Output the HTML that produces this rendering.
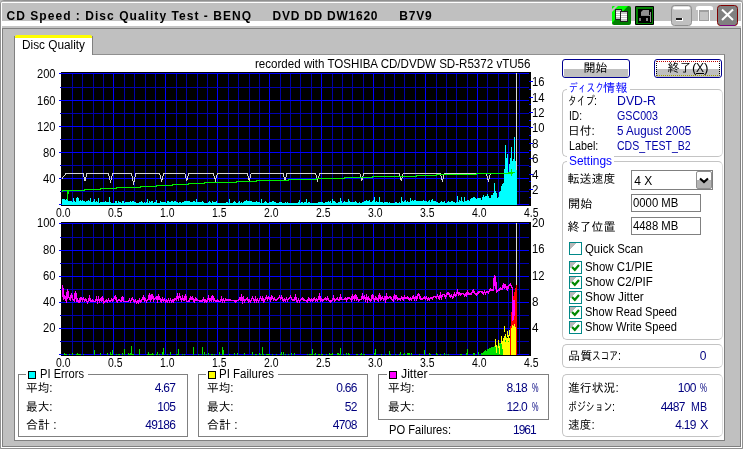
<!DOCTYPE html><html><head><meta charset="utf-8"><title>CD Speed : Disc Quality Test</title><style>
html,body{margin:0;padding:0;}
body{width:743px;height:449px;overflow:hidden;background:#c0c0c0;position:relative;font-family:"Liberation Sans","IPAGothic","Noto Sans CJK JP",sans-serif;font-size:12px;}
.a{position:absolute;}
.t{position:absolute;white-space:pre;line-height:12px;height:12px;transform-origin:0 0;}
.gb{position:absolute;border:1px solid #808080;box-sizing:border-box;}
.rg{position:absolute;border:1px solid #c4c4c4;border-right-color:#dcdcdc;border-radius:5px;box-sizing:border-box;}
.ed{position:absolute;box-sizing:border-box;border:1px solid #808080;background:#fff;}
.cb{position:absolute;width:13px;height:13px;box-sizing:border-box;border:1px solid #008888;background:linear-gradient(135deg,#b8b8b8 0%,#b8b8b8 28%,#fff 29%,#fff 100%);}
.btn{position:absolute;box-sizing:border-box;border:1px solid #000090;border-radius:3px;background:#fff;}
.btn::after{content:'';position:absolute;left:1px;right:1px;top:9px;bottom:0;background:#c0c0c0;}
.sq{position:absolute;width:8px;height:8px;box-sizing:border-box;border:1px solid #000;}
.bg{position:absolute;background:#fff;}

</style></head><body>
<div class="a" style="left:0;top:0;width:743px;height:449px;box-sizing:border-box;border:1px solid #909090;border-radius:4px 4px 0 0;"></div>
<div class="a" style="left:1px;top:1px;width:741px;height:447px;box-sizing:border-box;border:1px solid #fff;border-top-color:#b0b0b0;border-radius:3px 3px 0 0;"></div>
<div class="a" style="left:2px;top:2px;width:739px;height:1px;background:#fff;"></div>
<div class="a" style="left:2px;top:3px;width:739px;height:18px;background:#c0c0c0;"></div>
<div class="a" style="left:2px;top:21px;width:739px;height:5px;background:#fff;"></div>
<div class="a" style="left:2px;top:26px;width:739px;height:2px;background:#c4c4c4;"></div>
<div class="a" style="left:2px;top:28px;width:739px;height:419px;box-sizing:border-box;border:1px solid #808080;background:#c0c0c0;"></div>
<div class="a" style="left:14px;top:54px;width:711px;height:387px;box-sizing:border-box;background:#fff;border:1px solid #808080;border-top-color:#909090;"></div>
<div class="a" style="left:14px;top:36px;width:79px;height:19px;background:#fff;border-right:1px solid #808080;border-left:1px solid #808080;box-sizing:border-box;"></div>
<div class="a" style="left:15px;top:35px;width:77px;height:3px;background:#ffff00;border-radius:2px 2px 0 0;"></div>
<svg class="a" style="left:0;top:0" width="743" height="30" viewBox="0 0 743 30">
<g shape-rendering="crispEdges">
<rect x="612" y="6" width="19" height="19" rx="2" fill="#008000" shape-rendering="auto"/>
<path d="M613 6 h15 l-16 17 v-16 z" fill="#00ff00" shape-rendering="auto"/>
<path d="M612 9 l3 -3 h3 l-6 6z" fill="#c0c0c0" shape-rendering="auto"/>
<rect x="615" y="9" width="7" height="11" fill="#202020"/>
<rect x="616" y="10" width="5" height="9" fill="#c0c0c0"/>
<path d="M616 12.5h5M616 14.5h5M616 16.5h5" stroke="#fff"/>
<rect x="620" y="11" width="8" height="11" fill="#202020"/>
<rect x="621" y="12" width="6" height="9" fill="#c8c8c8"/>
<path d="M621 14.5h6M621 16.5h6M621 18.5h6" stroke="#fff"/>
<rect x="635" y="6" width="19" height="19" rx="1" fill="#000" shape-rendering="auto"/>
<rect x="636" y="7" width="17" height="17" fill="#008000"/>
<rect x="638" y="9" width="14" height="14" fill="#000"/>
<path d="M641 15 v-3 l2 -2 h6 v5z" fill="#909090" shape-rendering="auto"/>
<rect x="641" y="15" width="9" height="1" fill="#808080"/>
<rect x="650" y="12" width="1" height="10" fill="#909090"/>
<rect x="639" y="18" width="2" height="3" fill="#707070"/>
<rect x="646" y="18" width="2" height="3" fill="#808080"/>
</g>
<rect x="671.5" y="5.5" width="20" height="20" rx="3" fill="#c0c0c0" stroke="#909090"/>
<rect x="673" y="6.5" width="17" height="3" rx="1.5" fill="#fff"/>
<rect x="676" y="18" width="7" height="3" fill="#fff" shape-rendering="crispEdges"/>
<rect x="676" y="18" width="6" height="2" fill="#202020" shape-rendering="crispEdges"/>
<path d="M696 10 v-2 q0 -2 3 -2 h11 q3 0 3 2 v2 z" fill="#fff"/>
<rect x="698.5" y="9.5" width="11" height="12" fill="none" stroke="#fff" shape-rendering="crispEdges"/>
<rect x="699.5" y="10.5" width="9" height="10" fill="#c4c4c4" stroke="#a0a0a0" shape-rendering="crispEdges"/>
<rect x="699" y="10" width="10" height="2" fill="#a0a0a0" shape-rendering="crispEdges"/>
<rect x="717.5" y="5.5" width="20" height="20" rx="3" fill="#808080" stroke="#800000"/>
<path d="M720 25.5 h15" stroke="#800080"/>
<path d="M722 9.5 l11 10.5 M733 9.5 l-11 10.5" stroke="#fff" stroke-width="2" fill="none"/>
</svg>
<svg class="a" style="left:0;top:0" width="743" height="449" viewBox="0 0 743 449" shape-rendering="crispEdges"><rect x="61" y="72" width="470" height="134" fill="#000"/><path d="M72.5 73V205" stroke="#0000a8"/><path d="M82.5 73V205" stroke="#0000a8"/><path d="M93.5 73V205" stroke="#0000a8"/><path d="M103.5 73V205" stroke="#0000a8"/><path d="M113.5 73V205" stroke="#0000ff"/><path d="M124.5 73V205" stroke="#0000a8"/><path d="M134.5 73V205" stroke="#0000a8"/><path d="M145.5 73V205" stroke="#0000a8"/><path d="M155.5 73V205" stroke="#0000a8"/><path d="M165.5 73V205" stroke="#0000ff"/><path d="M176.5 73V205" stroke="#0000a8"/><path d="M186.5 73V205" stroke="#0000a8"/><path d="M197.5 73V205" stroke="#0000a8"/><path d="M207.5 73V205" stroke="#0000a8"/><path d="M217.5 73V205" stroke="#0000ff"/><path d="M228.5 73V205" stroke="#0000a8"/><path d="M238.5 73V205" stroke="#0000a8"/><path d="M249.5 73V205" stroke="#0000a8"/><path d="M259.5 73V205" stroke="#0000a8"/><path d="M269.5 73V205" stroke="#0000ff"/><path d="M280.5 73V205" stroke="#0000a8"/><path d="M290.5 73V205" stroke="#0000a8"/><path d="M300.5 73V205" stroke="#0000a8"/><path d="M311.5 73V205" stroke="#0000a8"/><path d="M321.5 73V205" stroke="#0000ff"/><path d="M332.5 73V205" stroke="#0000a8"/><path d="M342.5 73V205" stroke="#0000a8"/><path d="M352.5 73V205" stroke="#0000a8"/><path d="M363.5 73V205" stroke="#0000a8"/><path d="M373.5 73V205" stroke="#0000ff"/><path d="M384.5 73V205" stroke="#0000a8"/><path d="M394.5 73V205" stroke="#0000a8"/><path d="M404.5 73V205" stroke="#0000a8"/><path d="M415.5 73V205" stroke="#0000a8"/><path d="M425.5 73V205" stroke="#0000ff"/><path d="M436.5 73V205" stroke="#0000a8"/><path d="M446.5 73V205" stroke="#0000a8"/><path d="M456.5 73V205" stroke="#0000a8"/><path d="M467.5 73V205" stroke="#0000a8"/><path d="M477.5 73V205" stroke="#0000ff"/><path d="M487.5 73V205" stroke="#0000a8"/><path d="M498.5 73V205" stroke="#0000a8"/><path d="M508.5 73V205" stroke="#0000a8"/><path d="M519.5 73V205" stroke="#0000a8"/><path d="M59 73.5H529" stroke="#0000ff"/><path d="M60 87.5H529" stroke="#0000b0"/><path d="M59 100.5H529" stroke="#0000ff"/><path d="M60 113.5H529" stroke="#0000b0"/><path d="M59 126.5H529" stroke="#0000ff"/><path d="M60 139.5H529" stroke="#0000b0"/><path d="M59 152.5H529" stroke="#0000ff"/><path d="M60 165.5H529" stroke="#0000b0"/><path d="M59 178.5H529" stroke="#0000ff"/><path d="M60 191.5H529" stroke="#0000b0"/><path d="M59 204.5H529" stroke="#0000ff"/><path d="M529 197.5H531" stroke="#0000ff"/><path d="M529 189.5H533" stroke="#0000ff"/><path d="M529 181.5H531" stroke="#0000ff"/><path d="M529 174.5H533" stroke="#0000ff"/><path d="M529 166.5H531" stroke="#0000ff"/><path d="M529 158.5H533" stroke="#0000ff"/><path d="M529 150.5H531" stroke="#0000ff"/><path d="M529 143.5H533" stroke="#0000ff"/><path d="M529 135.5H531" stroke="#0000ff"/><path d="M529 127.5H533" stroke="#0000ff"/><path d="M529 120.5H531" stroke="#0000ff"/><path d="M529 112.5H533" stroke="#0000ff"/><path d="M529 104.5H531" stroke="#0000ff"/><path d="M529 97.5H533" stroke="#0000ff"/><path d="M529 89.5H531" stroke="#0000ff"/><path d="M529 81.5H533" stroke="#0000ff"/><rect x="61" y="222" width="470" height="134" fill="#000"/><path d="M72.5 223V355" stroke="#0000a8"/><path d="M82.5 223V355" stroke="#0000a8"/><path d="M93.5 223V355" stroke="#0000a8"/><path d="M103.5 223V355" stroke="#0000a8"/><path d="M113.5 223V355" stroke="#0000ff"/><path d="M124.5 223V355" stroke="#0000a8"/><path d="M134.5 223V355" stroke="#0000a8"/><path d="M145.5 223V355" stroke="#0000a8"/><path d="M155.5 223V355" stroke="#0000a8"/><path d="M165.5 223V355" stroke="#0000ff"/><path d="M176.5 223V355" stroke="#0000a8"/><path d="M186.5 223V355" stroke="#0000a8"/><path d="M197.5 223V355" stroke="#0000a8"/><path d="M207.5 223V355" stroke="#0000a8"/><path d="M217.5 223V355" stroke="#0000ff"/><path d="M228.5 223V355" stroke="#0000a8"/><path d="M238.5 223V355" stroke="#0000a8"/><path d="M249.5 223V355" stroke="#0000a8"/><path d="M259.5 223V355" stroke="#0000a8"/><path d="M269.5 223V355" stroke="#0000ff"/><path d="M280.5 223V355" stroke="#0000a8"/><path d="M290.5 223V355" stroke="#0000a8"/><path d="M300.5 223V355" stroke="#0000a8"/><path d="M311.5 223V355" stroke="#0000a8"/><path d="M321.5 223V355" stroke="#0000ff"/><path d="M332.5 223V355" stroke="#0000a8"/><path d="M342.5 223V355" stroke="#0000a8"/><path d="M352.5 223V355" stroke="#0000a8"/><path d="M363.5 223V355" stroke="#0000a8"/><path d="M373.5 223V355" stroke="#0000ff"/><path d="M384.5 223V355" stroke="#0000a8"/><path d="M394.5 223V355" stroke="#0000a8"/><path d="M404.5 223V355" stroke="#0000a8"/><path d="M415.5 223V355" stroke="#0000a8"/><path d="M425.5 223V355" stroke="#0000ff"/><path d="M436.5 223V355" stroke="#0000a8"/><path d="M446.5 223V355" stroke="#0000a8"/><path d="M456.5 223V355" stroke="#0000a8"/><path d="M467.5 223V355" stroke="#0000a8"/><path d="M477.5 223V355" stroke="#0000ff"/><path d="M487.5 223V355" stroke="#0000a8"/><path d="M498.5 223V355" stroke="#0000a8"/><path d="M508.5 223V355" stroke="#0000a8"/><path d="M519.5 223V355" stroke="#0000a8"/><path d="M59 223.5H529" stroke="#0000ff"/><path d="M60 237.5H529" stroke="#0000b0"/><path d="M59 250.5H529" stroke="#0000ff"/><path d="M60 263.5H529" stroke="#0000b0"/><path d="M59 276.5H529" stroke="#0000ff"/><path d="M60 289.5H529" stroke="#0000b0"/><path d="M59 302.5H529" stroke="#0000ff"/><path d="M60 315.5H529" stroke="#0000b0"/><path d="M59 328.5H529" stroke="#0000ff"/><path d="M60 341.5H529" stroke="#0000b0"/><path d="M59 354.5H529" stroke="#0000ff"/><path d="M62.5 205.0V199.0M63.5 205.0V199.0M64.5 205.0V199.0M65.5 205.0V200.0M66.5 205.0V199.0M67.5 205.0V195.0M68.5 205.0V201.0M69.5 205.0V201.0M70.5 205.0V201.0M71.5 205.0V201.0M72.5 205.0V202.0M73.5 205.0V198.0M74.5 205.0V201.0M75.5 205.0V202.0M76.5 205.0V198.0M77.5 205.0V197.0M78.5 205.0V198.0M79.5 205.0V201.0M80.5 205.0V200.0M81.5 205.0V201.0M82.5 205.0V200.0M83.5 205.0V201.0M84.5 205.0V201.0M85.5 205.0V202.0M86.5 205.0V201.0M87.5 205.0V201.0M88.5 205.0V200.0M89.5 205.0V201.0M90.5 205.0V198.0M91.5 205.0V202.0M92.5 205.0V202.0M93.5 205.0V201.0M94.5 205.0V199.0M95.5 205.0V202.0M96.5 205.0V201.0M97.5 205.0V202.0M98.5 205.0V198.0M99.5 205.0V203.0M100.5 205.0V202.0M101.5 205.0V202.0M102.5 205.0V202.0M103.5 205.0V202.0M104.5 205.0V202.0M105.5 205.0V201.0M106.5 205.0V202.0M107.5 205.0V202.0M108.5 205.0V202.0M109.5 205.0V197.0M110.5 205.0V202.0M111.5 205.0V203.0M112.5 205.0V203.0M113.5 205.0V203.0M114.5 205.0V203.0M115.5 205.0V201.0M116.5 205.0V201.0M117.5 205.0V203.0M118.5 205.0V201.0M119.5 205.0V202.0M120.5 205.0V202.0M121.5 205.0V203.0M122.5 205.0V201.0M123.5 205.0V201.0M124.5 205.0V203.0M125.5 205.0V202.0M126.5 205.0V202.0M127.5 205.0V202.0M128.5 205.0V202.0M129.5 205.0V202.0M130.5 205.0V201.0M131.5 205.0V202.0M132.5 205.0V201.0M133.5 205.0V201.0M134.5 205.0V202.0M135.5 205.0V202.0M136.5 205.0V203.0M137.5 205.0V203.0M138.5 205.0V203.0M139.5 205.0V202.0M140.5 205.0V202.0M141.5 205.0V201.0M142.5 205.0V202.0M143.5 205.0V203.0M144.5 205.0V202.0M145.5 205.0V203.0M146.5 205.0V202.0M147.5 205.0V199.0M148.5 205.0V203.0M149.5 205.0V201.0M150.5 205.0V202.0M151.5 205.0V201.0M152.5 205.0V201.0M153.5 205.0V203.0M154.5 205.0V202.0M155.5 205.0V202.0M156.5 205.0V200.0M157.5 205.0V203.0M158.5 205.0V203.0M159.5 205.0V203.0M160.5 205.0V201.0M161.5 205.0V202.0M162.5 205.0V202.0M163.5 205.0V202.0M164.5 205.0V202.0M165.5 205.0V202.0M166.5 205.0V203.0M167.5 205.0V201.0M168.5 205.0V201.0M169.5 205.0V202.0M170.5 205.0V202.0M171.5 205.0V201.0M172.5 205.0V201.0M173.5 205.0V202.0M174.5 205.0V201.0M175.5 205.0V201.0M176.5 205.0V202.0M177.5 205.0V202.0M178.5 205.0V203.0M179.5 205.0V202.0M180.5 205.0V202.0M181.5 205.0V203.0M182.5 205.0V202.0M183.5 205.0V202.0M184.5 205.0V201.0M185.5 205.0V201.0M186.5 205.0V201.0M187.5 205.0V201.0M188.5 205.0V201.0M189.5 205.0V201.0M190.5 205.0V202.0M191.5 205.0V202.0M192.5 205.0V202.0M193.5 205.0V201.0M194.5 205.0V201.0M195.5 205.0V202.0M196.5 205.0V199.0M197.5 205.0V202.0M198.5 205.0V202.0M199.5 205.0V202.0M200.5 205.0V202.0M201.5 205.0V202.0M202.5 205.0V201.0M203.5 205.0V202.0M204.5 205.0V203.0M205.5 205.0V203.0M206.5 205.0V203.0M207.5 205.0V203.0M208.5 205.0V202.0M209.5 205.0V201.0M210.5 205.0V202.0M211.5 205.0V203.0M212.5 205.0V201.0M213.5 205.0V202.0M214.5 205.0V202.0M215.5 205.0V202.0M216.5 205.0V201.0M217.5 205.0V203.0M218.5 205.0V203.0M219.5 205.0V203.0M220.5 205.0V203.0M221.5 205.0V203.0M222.5 205.0V203.0M223.5 205.0V203.0M224.5 205.0V203.0M225.5 205.0V203.0M226.5 205.0V202.0M227.5 205.0V202.0M228.5 205.0V203.0M229.5 205.0V199.0M230.5 205.0V203.0M231.5 205.0V203.0M232.5 205.0V203.0M233.5 205.0V202.0M234.5 205.0V201.0M235.5 205.0V202.0M236.5 205.0V203.0M237.5 205.0V203.0M238.5 205.0V202.0M239.5 205.0V201.0M240.5 205.0V203.0M241.5 205.0V202.0M242.5 205.0V203.0M243.5 205.0V202.0M244.5 205.0V201.0M245.5 205.0V201.0M246.5 205.0V200.0M247.5 205.0V201.0M248.5 205.0V201.0M249.5 205.0V201.0M250.5 205.0V201.0M251.5 205.0V201.0M252.5 205.0V202.0M253.5 205.0V202.0M254.5 205.0V202.0M255.5 205.0V202.0M256.5 205.0V201.0M257.5 205.0V202.0M258.5 205.0V202.0M259.5 205.0V202.0M260.5 205.0V203.0M261.5 205.0V199.0M262.5 205.0V203.0M263.5 205.0V203.0M264.5 205.0V202.0M265.5 205.0V201.0M266.5 205.0V202.0M267.5 205.0V203.0M268.5 205.0V203.0M269.5 205.0V202.0M270.5 205.0V202.0M271.5 205.0V202.0M272.5 205.0V201.0M273.5 205.0V201.0M274.5 205.0V202.0M275.5 205.0V202.0M276.5 205.0V203.0M277.5 205.0V203.0M278.5 205.0V203.0M279.5 205.0V202.0M280.5 205.0V202.0M281.5 205.0V202.0M282.5 205.0V203.0M283.5 205.0V203.0M284.5 205.0V203.0M285.5 205.0V202.0M286.5 205.0V203.0M287.5 205.0V202.0M288.5 205.0V203.0M289.5 205.0V203.0M290.5 205.0V203.0M291.5 205.0V203.0M292.5 205.0V203.0M293.5 205.0V203.0M294.5 205.0V203.0M295.5 205.0V203.0M296.5 205.0V203.0M297.5 205.0V203.0M298.5 205.0V202.0M299.5 205.0V200.0M300.5 205.0V203.0M301.5 205.0V202.0M302.5 205.0V202.0M303.5 205.0V203.0M304.5 205.0V202.0M305.5 205.0V202.0M306.5 205.0V199.0M307.5 205.0V203.0M308.5 205.0V202.0M309.5 205.0V202.0M310.5 205.0V203.0M311.5 205.0V203.0M312.5 205.0V203.0M313.5 205.0V203.0M314.5 205.0V203.0M315.5 205.0V203.0M316.5 205.0V203.0M317.5 205.0V203.0M318.5 205.0V202.0M319.5 205.0V202.0M320.5 205.0V202.0M321.5 205.0V202.0M322.5 205.0V202.0M323.5 205.0V203.0M324.5 205.0V203.0M325.5 205.0V202.0M326.5 205.0V202.0M327.5 205.0V202.0M328.5 205.0V201.0M329.5 205.0V202.0M330.5 205.0V201.0M331.5 205.0V203.0M332.5 205.0V199.0M333.5 205.0V201.0M334.5 205.0V201.0M335.5 205.0V202.0M336.5 205.0V203.0M337.5 205.0V203.0M338.5 205.0V202.0M339.5 205.0V202.0M340.5 205.0V198.0M341.5 205.0V201.0M342.5 205.0V203.0M343.5 205.0V202.0M344.5 205.0V201.0M345.5 205.0V202.0M346.5 205.0V202.0M347.5 205.0V202.0M348.5 205.0V199.0M349.5 205.0V201.0M350.5 205.0V202.0M351.5 205.0V202.0M352.5 205.0V202.0M353.5 205.0V202.0M354.5 205.0V202.0M355.5 205.0V201.0M356.5 205.0V202.0M357.5 205.0V203.0M358.5 205.0V203.0M359.5 205.0V202.0M360.5 205.0V203.0M361.5 205.0V203.0M362.5 205.0V202.0M363.5 205.0V202.0M364.5 205.0V201.0M365.5 205.0V201.0M366.5 205.0V200.0M367.5 205.0V201.0M368.5 205.0V201.0M369.5 205.0V200.0M370.5 205.0V202.0M371.5 205.0V202.0M372.5 205.0V201.0M373.5 205.0V200.0M374.5 205.0V197.0M375.5 205.0V202.0M376.5 205.0V201.0M377.5 205.0V202.0M378.5 205.0V202.0M379.5 205.0V197.0M380.5 205.0V202.0M381.5 205.0V202.0M382.5 205.0V202.0M383.5 205.0V203.0M384.5 205.0V202.0M385.5 205.0V202.0M386.5 205.0V202.0M387.5 205.0V202.0M388.5 205.0V203.0M389.5 205.0V202.0M390.5 205.0V203.0M391.5 205.0V203.0M392.5 205.0V203.0M393.5 205.0V203.0M394.5 205.0V203.0M395.5 205.0V202.0M396.5 205.0V202.0M397.5 205.0V203.0M398.5 205.0V203.0M399.5 205.0V202.0M400.5 205.0V203.0M401.5 205.0V197.0M402.5 205.0V201.0M403.5 205.0V202.0M404.5 205.0V201.0M405.5 205.0V200.0M406.5 205.0V202.0M407.5 205.0V201.0M408.5 205.0V202.0M409.5 205.0V202.0M410.5 205.0V198.0M411.5 205.0V201.0M412.5 205.0V200.0M413.5 205.0V201.0M414.5 205.0V200.0M415.5 205.0V200.0M416.5 205.0V201.0M417.5 205.0V201.0M418.5 205.0V201.0M419.5 205.0V201.0M420.5 205.0V201.0M421.5 205.0V201.0M422.5 205.0V201.0M423.5 205.0V200.0M424.5 205.0V201.0M425.5 205.0V201.0M426.5 205.0V201.0M427.5 205.0V202.0M428.5 205.0V201.0M429.5 205.0V200.0M430.5 205.0V202.0M431.5 205.0V200.0M432.5 205.0V199.0M433.5 205.0V201.0M434.5 205.0V201.0M435.5 205.0V201.0M436.5 205.0V202.0M437.5 205.0V202.0M438.5 205.0V203.0M439.5 205.0V203.0M440.5 205.0V202.0M441.5 205.0V201.0M442.5 205.0V202.0M443.5 205.0V202.0M444.5 205.0V201.0M445.5 205.0V203.0M446.5 205.0V203.0M447.5 205.0V202.0M448.5 205.0V201.0M449.5 205.0V202.0M450.5 205.0V202.0M451.5 205.0V201.0M452.5 205.0V201.0M453.5 205.0V202.0M454.5 205.0V202.0M455.5 205.0V203.0M456.5 205.0V202.0M457.5 205.0V196.0M458.5 205.0V202.0M459.5 205.0V200.0M460.5 205.0V201.0M461.5 205.0V197.0M462.5 205.0V201.0M463.5 205.0V202.0M464.5 205.0V197.0M465.5 205.0V201.0M466.5 205.0V201.0M467.5 205.0V200.0M468.5 205.0V200.0M469.5 205.0V201.0M470.5 205.0V199.0M471.5 205.0V198.0M472.5 205.0V198.0M473.5 205.0V197.0M474.5 205.0V197.0M475.5 205.0V198.0M476.5 205.0V199.0M477.5 205.0V198.0M478.5 205.0V198.0M479.5 205.0V198.0M480.5 205.0V198.0M481.5 205.0V200.0M482.5 205.0V197.0M483.5 205.0V195.0M484.5 205.0V197.0M485.5 205.0V196.0M486.5 205.0V196.0M487.5 205.0V194.0M488.5 205.0V196.0M489.5 205.0V198.0M490.5 205.0V198.0M491.5 205.0V195.0M492.5 205.0V195.0M493.5 205.0V193.0M494.5 205.0V183.0M495.5 205.0V191.0M496.5 205.0V193.0M497.5 205.0V198.0M498.5 205.0V197.0M499.5 205.0V192.0M500.5 205.0V191.0M501.5 205.0V186.0M502.5 205.0V184.0M503.5 205.0V183.0M504.5 205.0V169.0M505.5 205.0V145.0M506.5 205.0V158.0M507.5 205.0V154.0M508.5 205.0V174.0M509.5 205.0V164.0M510.5 205.0V158.0M511.5 205.0V147.0M512.5 205.0V161.0M513.5 205.0V159.0M514.5 205.0V137.0M515.5 205.0V161.0M516.5 205.0V167.0" stroke="#00ffff" fill="none"/><path d="M62 178.5 L66 173.5 L83 173.5 L85 180.5 L87 173.5 L108.5 173.5 L110.5 182.5 L112.5 173.5 L131.6 173.5 L133.6 184.5 L135.6 173.5 L159.6 173.5 L161.6 181.5 L163.6 173.5 L184.8 173.5 L186.8 180.5 L188.8 173.5 L213.4 173.5 L215.4 180.5 L217.4 173.5 L247.2 173.5 L249.2 180.5 L251.2 173.5 L283 173.5 L285 180.5 L287 173.5 L315.7 173.5 L317.7 180.5 L319.7 173.5 L359.8 173.5 L361.8 180.5 L363.8 173.5 L399.2 173.5 L401.2 180.5 L403.2 173.5 L440.4 173.5 L442.4 181.5 L444.4 173.5 L486.4 173.5 L488.4 181.5 L490.4 173.5 L513 173.5" stroke="#d4d4d4" fill="none"/><path d="M62.5 192 V190.5 H67.5 V200 M68.5 194 V190.5 H84 V189.5 H100 V188.5 H108 V188.5 H116 V187.5 H124 V187.5 H140 V186.5 H156 V185.5 H172 V184.5 H188 V183.5 H204 V182.5 H216 V182.5 H236 V181.5 H256 V180.5 H272 V180.5 H288 V179.5 H296 V179.5 H308 V179.5 H316 V178.5 H324 V178.5 H344 V177.5 H364 V177.5 H372 V176.5 H388 V176.5 H396 V176.5 H416 V175.5 H436 V174.5 H456 V174.5 H476 V173.5 H484 V173.5 H496 V173.5 H512 V172.5 H513 V172.5" stroke="#00f000" fill="none"/><path d="M511.5 169V176M508 172.5H515" stroke="#00e800" fill="none"/><path d="M516.5 73V170" stroke="#d8d8d8"/><path d="M516.5 223V287" stroke="#d8d8d8"/><path d="M64.5 355.0V353.0M65.5 355.0V354.0M66.5 355.0V354.0M69.5 355.0V354.0M72.5 355.0V353.0M76.5 355.0V354.0M77.5 355.0V353.0M78.5 355.0V354.0M79.5 355.0V354.0M80.5 355.0V354.0M83.5 355.0V354.0M100.5 355.0V353.0M107.5 355.0V353.0M110.5 355.0V352.0M111.5 355.0V354.0M112.5 355.0V350.0M116.5 355.0V354.0M118.5 355.0V354.0M119.5 355.0V354.0M122.5 355.0V353.0M128.5 355.0V353.0M129.5 355.0V354.0M130.5 355.0V353.0M132.5 355.0V354.0M133.5 355.0V354.0M139.5 355.0V354.0M147.5 355.0V354.0M148.5 355.0V352.0M149.5 355.0V354.0M150.5 355.0V354.0M151.5 355.0V354.0M152.5 355.0V353.0M153.5 355.0V354.0M156.5 355.0V354.0M157.5 355.0V352.0M159.5 355.0V354.0M162.5 355.0V352.0M167.5 355.0V354.0M170.5 355.0V352.0M176.5 355.0V354.0M177.5 355.0V354.0M178.5 355.0V354.0M182.5 355.0V354.0M184.5 355.0V354.0M193.5 355.0V347.0M198.5 355.0V354.0M202.5 355.0V347.0M204.5 355.0V352.0M206.5 355.0V354.0M208.5 355.0V353.0M211.5 355.0V354.0M212.5 355.0V354.0M214.5 355.0V354.0M219.5 355.0V352.0M222.5 355.0V347.0M229.5 355.0V354.0M234.5 355.0V353.0M237.5 355.0V353.0M244.5 355.0V353.0M252.5 355.0V352.0M255.5 355.0V354.0M256.5 355.0V354.0M259.5 355.0V353.0M260.5 355.0V354.0M262.5 355.0V347.0M263.5 355.0V354.0M266.5 355.0V354.0M267.5 355.0V354.0M268.5 355.0V354.0M269.5 355.0V354.0M272.5 355.0V354.0M276.5 355.0V354.0M280.5 355.0V354.0M281.5 355.0V352.0M283.5 355.0V352.0M285.5 355.0V354.0M288.5 355.0V354.0M291.5 355.0V353.0M294.5 355.0V353.0M307.5 355.0V354.0M309.5 355.0V354.0M310.5 355.0V354.0M311.5 355.0V354.0M314.5 355.0V354.0M315.5 355.0V353.0M318.5 355.0V354.0M319.5 355.0V354.0M321.5 355.0V354.0M322.5 355.0V354.0M326.5 355.0V354.0M329.5 355.0V353.0M330.5 355.0V354.0M331.5 355.0V354.0M332.5 355.0V353.0M337.5 355.0V353.0M338.5 355.0V353.0M339.5 355.0V354.0M343.5 355.0V354.0M346.5 355.0V353.0M348.5 355.0V353.0M349.5 355.0V354.0M356.5 355.0V354.0M357.5 355.0V354.0M360.5 355.0V354.0M361.5 355.0V353.0M363.5 355.0V354.0M364.5 355.0V354.0M374.5 355.0V353.0M375.5 355.0V349.0M381.5 355.0V354.0M385.5 355.0V354.0M389.5 355.0V351.0M390.5 355.0V354.0M395.5 355.0V354.0M399.5 355.0V354.0M400.5 355.0V352.0M403.5 355.0V354.0M404.5 355.0V353.0M407.5 355.0V353.0M408.5 355.0V353.0M409.5 355.0V353.0M411.5 355.0V353.0M419.5 355.0V354.0M424.5 355.0V350.0M429.5 355.0V353.0M430.5 355.0V354.0M436.5 355.0V353.0M437.5 355.0V354.0M440.5 355.0V354.0M444.5 355.0V353.0M446.5 355.0V354.0M448.5 355.0V354.0M460.5 355.0V354.0M461.5 355.0V354.0M466.5 355.0V353.0M467.5 355.0V349.0M473.5 355.0V353.0M474.5 355.0V353.0M478.5 355.0V352.0M481.5 355.0V353.0M131.5 355.0V346.0M124.5 355.0V349.0M139.5 355.0V349.0M163.5 355.0V348.0M178.5 355.0V349.0M94.5 355.0V350.0M340.5 355.0V348.0M223.5 355.0V350.0M312.5 355.0V349.0M482.5 355.0V353.0M483.5 355.0V352.0M484.5 355.0V351.0M485.5 355.0V350.0M486.5 355.0V351.0M487.5 355.0V349.0M488.5 355.0V349.0M489.5 355.0V348.0M490.5 355.0V348.0M491.5 355.0V347.0M492.5 355.0V347.0M493.5 355.0V347.0M494.5 355.0V346.0M495.5 355.0V344.0M496.5 355.0V346.0M497.5 355.0V346.0M498.5 355.0V342.0M499.5 355.0V343.0M500.5 355.0V343.0M501.5 355.0V344.0M502.5 355.0V343.0M503.5 355.0V342.0M504.5 355.0V337.0M505.5 355.0V339.0M506.5 355.0V337.0M507.5 355.0V342.0M508.5 355.0V341.0M509.5 355.0V340.0" stroke="#00e000" fill="none"/><path d="M495.5 347V339M496.5 353V345M498.5 348V340M499.5 354V346M501.5 344V336M502.5 349V341M503.5 346V338M504.5 332V326M505.5 340V334M506.5 344V338M507.5 337V331M508.5 341V335M509.5 336V330" stroke="#ffff00" fill="none"/><path d="M503.5 355.0V344M504.5 355.0V336M505.5 355.0V342M506.5 355.0V344M507.5 355.0V338M508.5 355.0V342M509.5 355.0V338" stroke="#ffff00" fill="none"/><path d="M510.5 355.0V326M511.5 355.0V312M512.5 355.0V300M513.5 355.0V296M514.5 355.0V292M515.5 355.0V288M516.5 355.0V285" stroke="#ff0000" fill="none"/><path d="M511.5 355.0V328M512.5 355.0V325M513.5 355.0V326M514.5 355.0V324M515.5 355.0V327" stroke="#ffff00" fill="none"/><path d="M62.5 285.5L63.5 299.5L64.5 295.5L65.5 299.5L66.5 301.5L67.5 289.5L68.5 296.5L69.5 298.5L70.5 299.5L71.5 293.5L72.5 299.5L73.5 299.5L74.5 300.5L75.5 291.5L76.5 300.5L77.5 299.5L78.5 302.5L79.5 302.5L80.5 297.5L81.5 297.5L82.5 300.5L83.5 298.5L84.5 300.5L85.5 299.5L86.5 300.5L87.5 302.5L88.5 300.5L89.5 297.5L90.5 301.5L91.5 301.5L92.5 300.5L93.5 301.5L94.5 301.5L95.5 301.5L96.5 298.5L97.5 301.5L98.5 298.5L99.5 301.5L100.5 299.5L101.5 300.5L102.5 296.5L103.5 302.5L104.5 301.5L105.5 301.5L106.5 300.5L107.5 301.5L108.5 299.5L109.5 301.5L110.5 301.5L111.5 299.5L112.5 300.5L113.5 299.5L114.5 297.5L115.5 296.5L116.5 300.5L117.5 301.5L118.5 299.5L119.5 299.5L120.5 301.5L121.5 301.5L122.5 296.5L123.5 301.5L124.5 301.5L125.5 301.5L126.5 301.5L127.5 301.5L128.5 301.5L129.5 299.5L130.5 301.5L131.5 299.5L132.5 298.5L133.5 300.5L134.5 301.5L135.5 300.5L136.5 302.5L137.5 301.5L138.5 302.5L139.5 299.5L140.5 301.5L141.5 300.5L142.5 298.5L143.5 296.5L144.5 300.5L145.5 299.5L146.5 301.5L147.5 299.5L148.5 299.5L149.5 293.5L150.5 301.5L151.5 294.5L152.5 294.5L153.5 300.5L154.5 298.5L155.5 298.5L156.5 297.5L157.5 300.5L158.5 295.5L159.5 297.5L160.5 300.5L161.5 301.5L162.5 298.5L163.5 300.5L164.5 299.5L165.5 301.5L166.5 300.5L167.5 301.5L168.5 299.5L169.5 301.5L170.5 299.5L171.5 301.5L172.5 300.5L173.5 301.5L174.5 298.5L175.5 298.5L176.5 299.5L177.5 295.5L178.5 298.5L179.5 295.5L180.5 298.5L181.5 300.5L182.5 297.5L183.5 300.5L184.5 300.5L185.5 294.5L186.5 301.5L187.5 301.5L188.5 301.5L189.5 300.5L190.5 297.5L191.5 298.5L192.5 297.5L193.5 300.5L194.5 301.5L195.5 298.5L196.5 299.5L197.5 300.5L198.5 300.5L199.5 300.5L200.5 301.5L201.5 301.5L202.5 300.5L203.5 298.5L204.5 301.5L205.5 300.5L206.5 301.5L207.5 300.5L208.5 297.5L209.5 300.5L210.5 299.5L211.5 300.5L212.5 295.5L213.5 300.5L214.5 299.5L215.5 301.5L216.5 301.5L217.5 300.5L218.5 301.5L219.5 301.5L220.5 301.5L221.5 298.5L222.5 301.5L223.5 299.5L224.5 301.5L225.5 299.5L226.5 300.5L227.5 300.5L228.5 299.5L229.5 299.5L230.5 300.5L231.5 300.5L232.5 300.5L233.5 300.5L234.5 300.5L235.5 301.5L236.5 300.5L237.5 300.5L238.5 300.5L239.5 298.5L240.5 299.5L241.5 296.5L242.5 301.5L243.5 298.5L244.5 301.5L245.5 299.5L246.5 299.5L247.5 298.5L248.5 301.5L249.5 300.5L250.5 301.5L251.5 299.5L252.5 297.5L253.5 299.5L254.5 301.5L255.5 298.5L256.5 301.5L257.5 299.5L258.5 301.5L259.5 299.5L260.5 297.5L261.5 299.5L262.5 297.5L263.5 301.5L264.5 300.5L265.5 298.5L266.5 296.5L267.5 299.5L268.5 297.5L269.5 298.5L270.5 300.5L271.5 296.5L272.5 297.5L273.5 299.5L274.5 298.5L275.5 300.5L276.5 300.5L277.5 298.5L278.5 298.5L279.5 296.5L280.5 298.5L281.5 296.5L282.5 299.5L283.5 300.5L284.5 299.5L285.5 300.5L286.5 298.5L287.5 300.5L288.5 298.5L289.5 298.5L290.5 296.5L291.5 298.5L292.5 300.5L293.5 300.5L294.5 299.5L295.5 296.5L296.5 300.5L297.5 301.5L298.5 299.5L299.5 301.5L300.5 299.5L301.5 299.5L302.5 298.5L303.5 299.5L304.5 300.5L305.5 300.5L306.5 300.5L307.5 301.5L308.5 298.5L309.5 299.5L310.5 300.5L311.5 299.5L312.5 300.5L313.5 299.5L314.5 298.5L315.5 300.5L316.5 299.5L317.5 300.5L318.5 298.5L319.5 295.5L320.5 300.5L321.5 299.5L322.5 300.5L323.5 299.5L324.5 299.5L325.5 298.5L326.5 299.5L327.5 297.5L328.5 300.5L329.5 300.5L330.5 301.5L331.5 300.5L332.5 300.5L333.5 297.5L334.5 300.5L335.5 299.5L336.5 299.5L337.5 298.5L338.5 300.5L339.5 300.5L340.5 296.5L341.5 299.5L342.5 299.5L343.5 299.5L344.5 299.5L345.5 298.5L346.5 300.5L347.5 297.5L348.5 297.5L349.5 298.5L350.5 298.5L351.5 300.5L352.5 295.5L353.5 297.5L354.5 299.5L355.5 294.5L356.5 299.5L357.5 298.5L358.5 300.5L359.5 299.5L360.5 299.5L361.5 299.5L362.5 295.5L363.5 298.5L364.5 296.5L365.5 299.5L366.5 296.5L367.5 300.5L368.5 297.5L369.5 299.5L370.5 300.5L371.5 299.5L372.5 294.5L373.5 298.5L374.5 300.5L375.5 297.5L376.5 298.5L377.5 299.5L378.5 300.5L379.5 293.5L380.5 299.5L381.5 298.5L382.5 297.5L383.5 299.5L384.5 297.5L385.5 300.5L386.5 295.5L387.5 298.5L388.5 298.5L389.5 296.5L390.5 296.5L391.5 299.5L392.5 299.5L393.5 300.5L394.5 294.5L395.5 298.5L396.5 296.5L397.5 299.5L398.5 298.5L399.5 298.5L400.5 299.5L401.5 297.5L402.5 298.5L403.5 299.5L404.5 296.5L405.5 298.5L406.5 298.5L407.5 297.5L408.5 298.5L409.5 299.5L410.5 298.5L411.5 299.5L412.5 297.5L413.5 296.5L414.5 299.5L415.5 297.5L416.5 299.5L417.5 295.5L418.5 294.5L419.5 295.5L420.5 299.5L421.5 299.5L422.5 298.5L423.5 298.5L424.5 297.5L425.5 298.5L426.5 297.5L427.5 299.5L428.5 298.5L429.5 299.5L430.5 297.5L431.5 297.5L432.5 298.5L433.5 296.5L434.5 296.5L435.5 296.5L436.5 297.5L437.5 295.5L438.5 297.5L439.5 298.5L440.5 294.5L441.5 297.5L442.5 294.5L443.5 294.5L444.5 294.5L445.5 297.5L446.5 295.5L447.5 292.5L448.5 292.5L449.5 295.5L450.5 296.5L451.5 295.5L452.5 297.5L453.5 296.5L454.5 293.5L455.5 295.5L456.5 294.5L457.5 291.5L458.5 294.5L459.5 293.5L460.5 294.5L461.5 293.5L462.5 293.5L463.5 293.5L464.5 295.5L465.5 294.5L466.5 295.5L467.5 291.5L468.5 293.5L469.5 294.5L470.5 294.5L471.5 293.5L472.5 291.5L473.5 290.5L474.5 293.5L475.5 293.5L476.5 294.5L477.5 293.5L478.5 292.5L479.5 291.5L480.5 291.5L481.5 291.5L482.5 292.5L483.5 293.5L484.5 291.5L485.5 293.5L486.5 291.5L487.5 291.5L488.5 292.5L489.5 290.5L490.5 289.5L491.5 290.5L492.5 290.5L493.5 289.5L494.5 275.5L495.5 279.5L496.5 291.5L497.5 290.5L498.5 290.5L499.5 289.5L500.5 288.5L501.5 289.5L502.5 289.5L503.5 283.5L504.5 287.5L505.5 285.5L506.5 288.5L507.5 289.5L508.5 285.5L509.5 285.5L510.5 284.5L511.5 286.5L512.5 288.5L512.5 320.5L513.5 318.5L513.5 300.5L514.5 300.5L514.5 315.5" stroke="#ff00ff" fill="none" stroke-width="1.6" shape-rendering="crispEdges" stroke-linejoin="miter"/><path d="M62.5 285.5L63.5 299.5L64.5 295.5L65.5 299.5L66.5 301.5L67.5 289.5L68.5 296.5L69.5 298.5L70.5 299.5L71.5 293.5L72.5 299.5L73.5 299.5L74.5 300.5L75.5 291.5L76.5 300.5L77.5 299.5L78.5 302.5L79.5 302.5L80.5 297.5L81.5 297.5L82.5 300.5L83.5 298.5L84.5 300.5L85.5 299.5L86.5 300.5L87.5 302.5L88.5 300.5L89.5 297.5L90.5 301.5L91.5 301.5L92.5 300.5L93.5 301.5L94.5 301.5L95.5 301.5L96.5 298.5L97.5 301.5L98.5 298.5L99.5 301.5L100.5 299.5L101.5 300.5L102.5 296.5L103.5 302.5L104.5 301.5L105.5 301.5L106.5 300.5L107.5 301.5L108.5 299.5L109.5 301.5L110.5 301.5L111.5 299.5L112.5 300.5L113.5 299.5L114.5 297.5L115.5 296.5L116.5 300.5L117.5 301.5L118.5 299.5L119.5 299.5L120.5 301.5L121.5 301.5L122.5 296.5L123.5 301.5L124.5 301.5L125.5 301.5L126.5 301.5L127.5 301.5L128.5 301.5L129.5 299.5L130.5 301.5L131.5 299.5L132.5 298.5L133.5 300.5L134.5 301.5L135.5 300.5L136.5 302.5L137.5 301.5L138.5 302.5L139.5 299.5L140.5 301.5L141.5 300.5L142.5 298.5L143.5 296.5L144.5 300.5L145.5 299.5L146.5 301.5L147.5 299.5L148.5 299.5L149.5 293.5L150.5 301.5L151.5 294.5L152.5 294.5L153.5 300.5L154.5 298.5L155.5 298.5L156.5 297.5L157.5 300.5L158.5 295.5L159.5 297.5L160.5 300.5L161.5 301.5L162.5 298.5L163.5 300.5L164.5 299.5L165.5 301.5L166.5 300.5L167.5 301.5L168.5 299.5L169.5 301.5L170.5 299.5L171.5 301.5L172.5 300.5L173.5 301.5L174.5 298.5L175.5 298.5L176.5 299.5L177.5 295.5L178.5 298.5L179.5 295.5L180.5 298.5L181.5 300.5L182.5 297.5L183.5 300.5L184.5 300.5L185.5 294.5L186.5 301.5L187.5 301.5L188.5 301.5L189.5 300.5L190.5 297.5L191.5 298.5L192.5 297.5L193.5 300.5L194.5 301.5L195.5 298.5L196.5 299.5L197.5 300.5L198.5 300.5L199.5 300.5L200.5 301.5L201.5 301.5L202.5 300.5L203.5 298.5L204.5 301.5L205.5 300.5L206.5 301.5L207.5 300.5L208.5 297.5L209.5 300.5L210.5 299.5L211.5 300.5L212.5 295.5L213.5 300.5L214.5 299.5L215.5 301.5L216.5 301.5L217.5 300.5L218.5 301.5L219.5 301.5L220.5 301.5L221.5 298.5L222.5 301.5L223.5 299.5L224.5 301.5L225.5 299.5L226.5 300.5L227.5 300.5L228.5 299.5L229.5 299.5L230.5 300.5L231.5 300.5L232.5 300.5L233.5 300.5L234.5 300.5L235.5 301.5L236.5 300.5L237.5 300.5L238.5 300.5L239.5 298.5L240.5 299.5L241.5 296.5L242.5 301.5L243.5 298.5L244.5 301.5L245.5 299.5L246.5 299.5L247.5 298.5L248.5 301.5L249.5 300.5L250.5 301.5L251.5 299.5L252.5 297.5L253.5 299.5L254.5 301.5L255.5 298.5L256.5 301.5L257.5 299.5L258.5 301.5L259.5 299.5L260.5 297.5L261.5 299.5L262.5 297.5L263.5 301.5L264.5 300.5L265.5 298.5L266.5 296.5L267.5 299.5L268.5 297.5L269.5 298.5L270.5 300.5L271.5 296.5L272.5 297.5L273.5 299.5L274.5 298.5L275.5 300.5L276.5 300.5L277.5 298.5L278.5 298.5L279.5 296.5L280.5 298.5L281.5 296.5L282.5 299.5L283.5 300.5L284.5 299.5L285.5 300.5L286.5 298.5L287.5 300.5L288.5 298.5L289.5 298.5L290.5 296.5L291.5 298.5L292.5 300.5L293.5 300.5L294.5 299.5L295.5 296.5L296.5 300.5L297.5 301.5L298.5 299.5L299.5 301.5L300.5 299.5L301.5 299.5L302.5 298.5L303.5 299.5L304.5 300.5L305.5 300.5L306.5 300.5L307.5 301.5L308.5 298.5L309.5 299.5L310.5 300.5L311.5 299.5L312.5 300.5L313.5 299.5L314.5 298.5L315.5 300.5L316.5 299.5L317.5 300.5L318.5 298.5L319.5 295.5L320.5 300.5L321.5 299.5L322.5 300.5L323.5 299.5L324.5 299.5L325.5 298.5L326.5 299.5L327.5 297.5L328.5 300.5L329.5 300.5L330.5 301.5L331.5 300.5L332.5 300.5L333.5 297.5L334.5 300.5L335.5 299.5L336.5 299.5L337.5 298.5L338.5 300.5L339.5 300.5L340.5 296.5L341.5 299.5L342.5 299.5L343.5 299.5L344.5 299.5L345.5 298.5L346.5 300.5L347.5 297.5L348.5 297.5L349.5 298.5L350.5 298.5L351.5 300.5L352.5 295.5L353.5 297.5L354.5 299.5L355.5 294.5L356.5 299.5L357.5 298.5L358.5 300.5L359.5 299.5L360.5 299.5L361.5 299.5L362.5 295.5L363.5 298.5L364.5 296.5L365.5 299.5L366.5 296.5L367.5 300.5L368.5 297.5L369.5 299.5L370.5 300.5L371.5 299.5L372.5 294.5L373.5 298.5L374.5 300.5L375.5 297.5L376.5 298.5L377.5 299.5L378.5 300.5L379.5 293.5L380.5 299.5L381.5 298.5L382.5 297.5L383.5 299.5L384.5 297.5L385.5 300.5L386.5 295.5L387.5 298.5L388.5 298.5L389.5 296.5L390.5 296.5L391.5 299.5L392.5 299.5L393.5 300.5L394.5 294.5L395.5 298.5L396.5 296.5L397.5 299.5L398.5 298.5L399.5 298.5L400.5 299.5L401.5 297.5L402.5 298.5L403.5 299.5L404.5 296.5L405.5 298.5L406.5 298.5L407.5 297.5L408.5 298.5L409.5 299.5L410.5 298.5L411.5 299.5L412.5 297.5L413.5 296.5L414.5 299.5L415.5 297.5L416.5 299.5L417.5 295.5L418.5 294.5L419.5 295.5L420.5 299.5L421.5 299.5L422.5 298.5L423.5 298.5L424.5 297.5L425.5 298.5L426.5 297.5L427.5 299.5L428.5 298.5L429.5 299.5L430.5 297.5L431.5 297.5L432.5 298.5L433.5 296.5L434.5 296.5L435.5 296.5L436.5 297.5L437.5 295.5L438.5 297.5L439.5 298.5L440.5 294.5L441.5 297.5L442.5 294.5L443.5 294.5L444.5 294.5L445.5 297.5L446.5 295.5L447.5 292.5L448.5 292.5L449.5 295.5L450.5 296.5L451.5 295.5L452.5 297.5L453.5 296.5L454.5 293.5L455.5 295.5L456.5 294.5L457.5 291.5L458.5 294.5L459.5 293.5L460.5 294.5L461.5 293.5L462.5 293.5L463.5 293.5L464.5 295.5L465.5 294.5L466.5 295.5L467.5 291.5L468.5 293.5L469.5 294.5L470.5 294.5L471.5 293.5L472.5 291.5L473.5 290.5L474.5 293.5L475.5 293.5L476.5 294.5L477.5 293.5L478.5 292.5L479.5 291.5L480.5 291.5L481.5 291.5L482.5 292.5L483.5 293.5L484.5 291.5L485.5 293.5L486.5 291.5L487.5 291.5L488.5 292.5L489.5 290.5L490.5 289.5L491.5 290.5L492.5 290.5L493.5 289.5L494.5 275.5L495.5 279.5L496.5 291.5L497.5 290.5L498.5 290.5L499.5 289.5L500.5 288.5L501.5 289.5L502.5 289.5L503.5 283.5L504.5 287.5L505.5 285.5L506.5 288.5L507.5 289.5L508.5 285.5L509.5 285.5L510.5 284.5L511.5 286.5L512.5 288.5L512.5 320.5L513.5 318.5L513.5 300.5L514.5 300.5L514.5 315.5" stroke="#ff00ff" fill="none" stroke-width="1" shape-rendering="auto" stroke-linejoin="round" opacity="0.7"/></svg>
<div class="gb" style="left:18px;top:374px;width:170px;height:63px;"></div>
<div class="gb" style="left:198px;top:374px;width:170px;height:63px;"></div>
<div class="gb" style="left:378px;top:374px;width:171px;height:46px;"></div>
<div class="bg" style="left:26px;top:368px;width:62px;height:12px;"></div>
<div class="bg" style="left:206px;top:368px;width:72px;height:12px;"></div>
<div class="bg" style="left:387px;top:368px;width:42px;height:12px;"></div>
<div class="sq" style="left:28px;top:371px;background:#00ffff;"></div>
<div class="sq" style="left:208px;top:371px;background:#ffff00;"></div>
<div class="sq" style="left:389px;top:371px;background:#ff00ff;"></div>
<div class="btn" style="left:562px;top:59px;width:68px;height:19px;"></div>
<div class="btn" style="left:654px;top:59px;width:68px;height:19px;"></div>
<div class="a" style="left:656px;top:61px;width:64px;height:15px;box-sizing:border-box;border:1px dotted #000;border-top-color:#c00000;border-bottom-color:#a0a000;"></div>
<div class="rg" style="left:562px;top:89px;width:161px;height:68px;"></div>
<div class="bg" style="left:567px;top:84px;width:63px;height:10px;"></div>
<div class="rg" style="left:562px;top:161px;width:161px;height:179px;"></div>
<div class="bg" style="left:567px;top:156px;width:47px;height:10px;"></div>
<div class="rg" style="left:562px;top:344px;width:161px;height:24px;"></div>
<div class="rg" style="left:562px;top:374px;width:161px;height:63px;"></div>
<div class="ed" style="left:631px;top:170px;width:82px;height:20px;"></div>
<div class="a" style="left:696px;top:171px;width:16px;height:18px;box-sizing:border-box;border:1px solid #909090;border-radius:2px;background:linear-gradient(#fff 0,#fff 50%,#b4b4b4 51%,#b4b4b4 100%);"></div>
<svg class="a" style="left:696px;top:171px" width="16" height="18"><path d="M4 7.5 L8 11 L12 7.5" stroke="#000" stroke-width="2.2" fill="none"/></svg>
<div class="ed" style="left:631px;top:194px;width:70px;height:18px;"></div>
<div class="ed" style="left:631px;top:217px;width:70px;height:18px;"></div>
<div class="cb" style="left:569px;top:242px;"></div>
<div class="cb" style="left:569px;top:261px;"></div>
<svg class="a" style="left:569px;top:261px" width="13" height="13"><path d="M3 6 L5.8 8.8 L10 4" stroke="#008800" stroke-width="2.2" fill="none"/></svg>
<div class="cb" style="left:569px;top:276px;"></div>
<svg class="a" style="left:569px;top:276px" width="13" height="13"><path d="M3 6 L5.8 8.8 L10 4" stroke="#008800" stroke-width="2.2" fill="none"/></svg>
<div class="cb" style="left:569px;top:291px;"></div>
<svg class="a" style="left:569px;top:291px" width="13" height="13"><path d="M3 6 L5.8 8.8 L10 4" stroke="#008800" stroke-width="2.2" fill="none"/></svg>
<div class="cb" style="left:569px;top:306px;"></div>
<svg class="a" style="left:569px;top:306px" width="13" height="13"><path d="M3 6 L5.8 8.8 L10 4" stroke="#008800" stroke-width="2.2" fill="none"/></svg>
<div class="cb" style="left:569px;top:321px;"></div>
<svg class="a" style="left:569px;top:321px" width="13" height="13"><path d="M3 6 L5.8 8.8 L10 4" stroke="#008800" stroke-width="2.2" fill="none"/></svg>
<div class="a" style="left:0;top:0;width:743px;height:449px;will-change:transform;">
<span class="t" style="left:6.50px;top:9.70px;font-weight:bold;letter-spacing:1.040px;">CD Speed : Disc Quality Test - BENQ</span>
<span class="t" style="left:272.50px;top:9.70px;font-weight:bold;letter-spacing:0.747px;">DVD DD DW1620</span>
<span class="t" style="left:399.20px;top:9.70px;font-weight:bold;letter-spacing:0.856px;">B7V9</span>
<span class="t" style="left:21.50px;top:39.20px;transform:scaleX(0.9841);">Disc Quality</span>
<span class="t" style="left:255.20px;top:57.70px;transform:scaleX(0.9644);">recorded with TOSHIBA CD/DVDW SD-R5372 vTU56</span>
<span class="t" style="left:36.50px;top:67.50px;transform:scaleX(0.9236);">200</span>
<span class="t" style="left:36.50px;top:94.50px;transform:scaleX(0.9236);">160</span>
<span class="t" style="left:36.50px;top:120.50px;transform:scaleX(0.9236);">120</span>
<span class="t" style="left:42.50px;top:146.50px;transform:scaleX(0.9357);">80</span>
<span class="t" style="left:42.50px;top:172.50px;transform:scaleX(0.9357);">40</span>
<span class="t" style="left:532.20px;top:75.50px;transform:scaleX(0.9357);">16</span>
<span class="t" style="left:532.20px;top:91.50px;transform:scaleX(0.9357);">14</span>
<span class="t" style="left:532.20px;top:106.50px;transform:scaleX(0.9357);">12</span>
<span class="t" style="left:532.20px;top:121.50px;transform:scaleX(0.9357);">10</span>
<span class="t" style="left:532.20px;top:137.50px;transform:scaleX(0.9720);">8</span>
<span class="t" style="left:532.20px;top:152.50px;transform:scaleX(0.9720);">6</span>
<span class="t" style="left:532.20px;top:168.50px;transform:scaleX(0.9720);">4</span>
<span class="t" style="left:532.20px;top:183.50px;transform:scaleX(0.9720);">2</span>
<span class="t" style="left:55.75px;top:206.70px;transform:scaleX(0.8689);">0.0</span>
<span class="t" style="left:55.75px;top:356.50px;transform:scaleX(0.8689);">0.0</span>
<span class="t" style="left:107.75px;top:206.70px;transform:scaleX(0.8689);">0.5</span>
<span class="t" style="left:107.75px;top:356.50px;transform:scaleX(0.8689);">0.5</span>
<span class="t" style="left:159.75px;top:206.70px;transform:scaleX(0.8689);">1.0</span>
<span class="t" style="left:159.75px;top:356.50px;transform:scaleX(0.8689);">1.0</span>
<span class="t" style="left:211.75px;top:206.70px;transform:scaleX(0.8689);">1.5</span>
<span class="t" style="left:211.75px;top:356.50px;transform:scaleX(0.8689);">1.5</span>
<span class="t" style="left:263.75px;top:206.70px;transform:scaleX(0.8689);">2.0</span>
<span class="t" style="left:263.75px;top:356.50px;transform:scaleX(0.8689);">2.0</span>
<span class="t" style="left:315.75px;top:206.70px;transform:scaleX(0.8689);">2.5</span>
<span class="t" style="left:315.75px;top:356.50px;transform:scaleX(0.8689);">2.5</span>
<span class="t" style="left:367.75px;top:206.70px;transform:scaleX(0.8689);">3.0</span>
<span class="t" style="left:367.75px;top:356.50px;transform:scaleX(0.8689);">3.0</span>
<span class="t" style="left:419.75px;top:206.70px;transform:scaleX(0.8689);">3.5</span>
<span class="t" style="left:419.75px;top:356.50px;transform:scaleX(0.8689);">3.5</span>
<span class="t" style="left:471.75px;top:206.70px;transform:scaleX(0.8689);">4.0</span>
<span class="t" style="left:471.75px;top:356.50px;transform:scaleX(0.8689);">4.0</span>
<span class="t" style="left:523.75px;top:206.70px;transform:scaleX(0.8689);">4.5</span>
<span class="t" style="left:523.75px;top:356.50px;transform:scaleX(0.8689);">4.5</span>
<span class="t" style="left:36.50px;top:216.70px;transform:scaleX(0.9236);">100</span>
<span class="t" style="left:42.50px;top:243.70px;transform:scaleX(0.9357);">80</span>
<span class="t" style="left:42.50px;top:269.70px;transform:scaleX(0.9357);">60</span>
<span class="t" style="left:42.50px;top:295.70px;transform:scaleX(0.9357);">40</span>
<span class="t" style="left:42.50px;top:321.70px;transform:scaleX(0.9357);">20</span>
<span class="t" style="left:531.80px;top:216.90px;transform:scaleX(0.9357);">20</span>
<span class="t" style="left:531.80px;top:243.20px;transform:scaleX(0.9357);">16</span>
<span class="t" style="left:531.80px;top:269.50px;transform:scaleX(0.9357);">12</span>
<span class="t" style="left:531.80px;top:295.80px;transform:scaleX(0.9720);">8</span>
<span class="t" style="left:531.80px;top:322.10px;transform:scaleX(0.9720);">4</span>
<span class="t" style="left:39.50px;top:368.20px;transform:scaleX(0.9294);">PI Errors</span>
<span class="t" style="left:218.80px;top:368.20px;transform:scaleX(0.9589);">PI Failures</span>
<span class="t" style="left:401.20px;top:368.20px;transform:scaleX(1.0225);">Jitter</span>
<span class="t" style="left:25.50px;top:382.20px;transform:scaleX(0.9691);">平均:</span>
<span class="t" style="left:154.65px;top:382.20px;color:#00007f;letter-spacing:-0.670px;">4.67</span>
<span class="t" style="left:25.50px;top:401.00px;transform:scaleX(0.9691);">最大:</span>
<span class="t" style="left:157.31px;top:401.00px;color:#00007f;letter-spacing:-0.670px;">105</span>
<span class="t" style="left:25.50px;top:419.20px;transform:scaleX(0.9944);">合計 :</span>
<span class="t" style="left:145.31px;top:419.20px;color:#00007f;letter-spacing:-0.670px;">49186</span>
<span class="t" style="left:206.80px;top:382.20px;transform:scaleX(0.9691);">平均:</span>
<span class="t" style="left:336.15px;top:382.20px;color:#00007f;letter-spacing:-0.670px;">0.66</span>
<span class="t" style="left:206.80px;top:401.00px;transform:scaleX(0.9691);">最大:</span>
<span class="t" style="left:344.81px;top:401.00px;color:#00007f;letter-spacing:-0.670px;">52</span>
<span class="t" style="left:206.80px;top:419.20px;transform:scaleX(0.9944);">合計 :</span>
<span class="t" style="left:332.81px;top:419.20px;color:#00007f;letter-spacing:-0.670px;">4708</span>
<span class="t" style="left:387.50px;top:382.20px;transform:scaleX(0.9691);">平均:</span>
<span class="t" style="left:506.45px;top:382.20px;color:#00007f;letter-spacing:-0.670px;">8.18</span>
<span class="t" style="left:531.80px;top:382.20px;color:#00007f;transform:scaleX(0.6091);">%</span>
<span class="t" style="left:387.50px;top:401.20px;transform:scaleX(0.9691);">最大:</span>
<span class="t" style="left:506.45px;top:401.20px;color:#00007f;letter-spacing:-0.670px;">12.0</span>
<span class="t" style="left:531.80px;top:401.20px;color:#00007f;transform:scaleX(0.6091);">%</span>
<span class="t" style="left:388.80px;top:423.70px;transform:scaleX(0.9297);">PO Failures:</span>
<span class="t" style="left:512.90px;top:423.70px;color:#00007f;letter-spacing:-0.934px;">1961</span>
<span class="t" style="left:583.50px;top:62.00px;">開始</span>
<span class="t" style="left:667.50px;top:62.00px;">終了</span>
<span class="t" style="left:692.00px;top:62.00px;transform:scaleX(1.1250);">(</span>
<span class="t" style="left:696.00px;top:62.00px;text-decoration:underline;">X</span>
<span class="t" style="left:703.50px;top:62.00px;transform:scaleX(1.1250);">)</span>
<span class="t" style="left:569.00px;top:82.20px;color:#0000ff;transform:scaleX(0.7292);">ディスク</span>
<span class="t" style="left:603.00px;top:82.20px;color:#0000ff;transform:scaleX(1.0208);">情報</span>
<span class="t" style="left:567.50px;top:94.80px;transform:scaleX(0.7361);">タイプ</span>
<span class="t" style="left:594.00px;top:94.80px;transform:scaleX(0.8972);">:</span>
<span class="t" style="left:568.50px;top:109.90px;transform:scaleX(0.8473);">ID:</span>
<span class="t" style="left:567.50px;top:124.70px;transform:scaleX(0.9765);">日付:</span>
<span class="t" style="left:568.50px;top:140.20px;transform:scaleX(0.8959);">Label:</span>
<span class="t" style="left:616.50px;top:94.80px;color:#0000a8;transform:scaleX(1.0263);">DVD-R</span>
<span class="t" style="left:616.50px;top:109.90px;color:#0000a8;transform:scaleX(0.8907);">GSC003</span>
<span class="t" style="left:616.50px;top:124.70px;color:#0000a8;transform:scaleX(0.9683);">5 August 2005</span>
<span class="t" style="left:616.50px;top:140.20px;color:#0000a8;transform:scaleX(0.8771);">CDS_TEST_B2</span>
<span class="t" style="left:569.00px;top:155.20px;color:#0000ff;transform:scaleX(0.9917);">Settings</span>
<span class="t" style="left:567.50px;top:173.20px;">転送速度</span>
<span class="t" style="left:567.50px;top:198.20px;transform:scaleX(1.0208);">開始</span>
<span class="t" style="left:567.50px;top:221.00px;">終了位置</span>
<span class="t" style="left:634.20px;top:174.50px;">4 X</span>
<span class="t" style="left:633.20px;top:196.90px;transform:scaleX(0.9431);">0000 MB</span>
<span class="t" style="left:633.20px;top:219.90px;transform:scaleX(0.9431);">4488 MB</span>
<span class="t" style="left:584.50px;top:242.60px;transform:scaleX(0.9485);">Quick Scan</span>
<span class="t" style="left:584.50px;top:261.40px;transform:scaleX(0.9499);">Show C1/PIE</span>
<span class="t" style="left:584.50px;top:276.40px;transform:scaleX(0.9589);">Show C2/PIF</span>
<span class="t" style="left:584.50px;top:291.40px;transform:scaleX(0.9889);">Show Jitter</span>
<span class="t" style="left:584.50px;top:306.40px;transform:scaleX(0.9193);">Show Read Speed</span>
<span class="t" style="left:584.50px;top:321.40px;transform:scaleX(0.9277);">Show Write Speed</span>
<span class="t" style="left:567.50px;top:350.20px;transform:scaleX(1.0208);">品質</span>
<span class="t" style="left:591.50px;top:350.20px;transform:scaleX(0.7222);">スコア</span>
<span class="t" style="left:618.00px;top:350.20px;transform:scaleX(0.8972);">:</span>
<span class="t" style="left:699.81px;top:350.20px;color:#00007f;letter-spacing:-0.670px;">0</span>
<span class="t" style="left:567.50px;top:382.20px;transform:scaleX(0.9894);">進行状況:</span>
<span class="t" style="left:567.50px;top:401.20px;transform:scaleX(0.7417);">ポジション</span>
<span class="t" style="left:612.00px;top:401.20px;transform:scaleX(0.8972);">:</span>
<span class="t" style="left:567.50px;top:418.80px;transform:scaleX(0.9765);">速度:</span>
<span class="t" style="left:677.81px;top:382.20px;color:#00007f;letter-spacing:-0.670px;">100</span>
<span class="t" style="left:700.30px;top:382.20px;color:#00007f;transform:scaleX(0.6559);">%</span>
<span class="t" style="left:660.81px;top:400.80px;color:#00007f;letter-spacing:-0.670px;">4487</span>
<span class="t" style="left:690.70px;top:400.80px;color:#00007f;transform:scaleX(0.8889);">MB</span>
<span class="t" style="left:675.15px;top:419.00px;color:#00007f;letter-spacing:-0.670px;">4.19</span>
<span class="t" style="left:700.10px;top:419.00px;color:#00007f;transform:scaleX(1.0604);">X</span>
</div>
</body></html>
